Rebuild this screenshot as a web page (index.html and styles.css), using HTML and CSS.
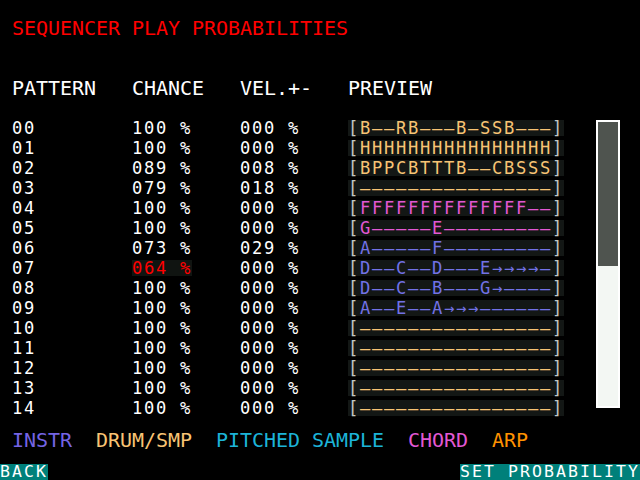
FILE: index.html
```html
<!DOCTYPE html>
<html>
<head>
<meta charset="utf-8">
<link rel="stylesheet" href="styles.css">
</head>
<body>
<div class="screen">
  <div class="title">SEQUENCER PLAY PROBABILITIES</div>
  <div class="row head">
    <span class="cell">PATTERN</span>
    <span class="cell">CHANCE</span>
    <span class="cell">VEL.+-</span>
    <span class="cell">PREVIEW</span>
  </div>
  <div class="main">
    <div class="table">
      <div class="row"><span class="cell">00</span><span class="cell">100 %</span><span class="cell">000 %</span><span class="prev drum">[<span class="seq">B––RB–––B–SSB–––</span>]</span></div>
      <div class="row"><span class="cell">01</span><span class="cell">100 %</span><span class="cell">000 %</span><span class="prev drum">[<span class="seq">HHHHHHHHHHHHHHHH</span>]</span></div>
      <div class="row"><span class="cell">02</span><span class="cell">089 %</span><span class="cell">008 %</span><span class="prev drum">[<span class="seq">BPPCBTTTB––CBSSS</span>]</span></div>
      <div class="row"><span class="cell">03</span><span class="cell">079 %</span><span class="cell">018 %</span><span class="prev drum">[<span class="seq">––––––––––––––––</span>]</span></div>
      <div class="row"><span class="cell">04</span><span class="cell">100 %</span><span class="cell">000 %</span><span class="prev chord">[<span class="seq">FFFFFFFFFFFFFF––</span>]</span></div>
      <div class="row"><span class="cell">05</span><span class="cell">100 %</span><span class="cell">000 %</span><span class="prev chord">[<span class="seq">G–––––E–––––––––</span>]</span></div>
      <div class="row"><span class="cell">06</span><span class="cell">073 %</span><span class="cell">029 %</span><span class="prev instr">[<span class="seq">A–––––F–––––––––</span>]</span></div>
      <div class="row"><span class="cell">07</span><span class="cell"><span class="sel">064 %</span></span><span class="cell">000 %</span><span class="prev instr">[<span class="seq">D––C––D–––E→→→→–</span>]</span></div>
      <div class="row"><span class="cell">08</span><span class="cell">100 %</span><span class="cell">000 %</span><span class="prev instr">[<span class="seq">D––C––B–––G→––––</span>]</span></div>
      <div class="row"><span class="cell">09</span><span class="cell">100 %</span><span class="cell">000 %</span><span class="prev instr">[<span class="seq">A––E––A→→→––––––</span>]</span></div>
      <div class="row"><span class="cell">10</span><span class="cell">100 %</span><span class="cell">000 %</span><span class="prev drum">[<span class="seq">––––––––––––––––</span>]</span></div>
      <div class="row"><span class="cell">11</span><span class="cell">100 %</span><span class="cell">000 %</span><span class="prev drum">[<span class="seq">––––––––––––––––</span>]</span></div>
      <div class="row"><span class="cell">12</span><span class="cell">100 %</span><span class="cell">000 %</span><span class="prev drum">[<span class="seq">––––––––––––––––</span>]</span></div>
      <div class="row"><span class="cell">13</span><span class="cell">100 %</span><span class="cell">000 %</span><span class="prev drum">[<span class="seq">––––––––––––––––</span>]</span></div>
      <div class="row"><span class="cell">14</span><span class="cell">100 %</span><span class="cell">000 %</span><span class="prev drum">[<span class="seq">––––––––––––––––</span>]</span></div>
    </div>
    <div class="scroll"><div class="thumb"></div></div>
  </div>
  <div class="legend">
    <span class="l-instr">INSTR</span>
    <span class="l-drum">DRUM/SMP</span>
    <span class="l-pitch">PITCHED SAMPLE</span>
    <span class="l-chord">CHORD</span>
    <span class="l-arp">ARP</span>
  </div>
  <div class="bottom">
    <span class="btn">BACK</span>
    <span class="btn">SET PROBABILITY</span>
  </div>
</div>
</body>
</html>
```

FILE: styles.css
```css
html, body {
  margin: 0;
  padding: 0;
  background: #000;
}

.screen {
  width: 640px;
  height: 480px;
  box-sizing: border-box;
  padding-top: 18px;
  display: flex;
  flex-direction: column;
  font-family: "DejaVu Sans Mono", "Liberation Mono", monospace;
  font-size: 20px;
  letter-spacing: -0.04px;
  line-height: 20px;
  color: #fff;
  overflow: hidden;
}

.title {
  padding-left: 12px;
  color: #ff0000;
  height: 20px;
  white-space: pre;
}

.row {
  display: grid;
  grid-template-columns: 120px 108px 108px 216px;
  height: 20px;
  white-space: pre;
}

.head {
  margin-top: 40px;
  padding-left: 12px;
}

.head .cell {
  display: block;
  height: 20px;
  line-height: 20px;
  margin-top: 0;
}

.main {
  margin-top: 20px;
  padding-left: 12px;
  display: flex;
  align-items: flex-start;
  font-size: 17.1px;
  letter-spacing: 1.71px;
}

.table {
  display: flex;
  flex-direction: column;
  width: 552px;
}

.cell {
  display: block;
  height: 16px;
  line-height: 16px;
  margin-top: 2px;
}

.sel {
  display: inline-block;
  width: 60px;
  height: 16px;
  background: #101411;
  color: #ff0000;
}

.prev {
  display: block;
  height: 16px;
  line-height: 16px;
  margin-top: 2px;
  width: 216px;
  background: #131715;
  color: #c4c8c4;
}

.drum .seq { color: #f8c474; }
.chord .seq { color: #e258d4; }
.instr .seq { color: #7272e6; }

.scroll {
  margin-left: 32px;
  margin-top: 2px;
  width: 24px;
  height: 288px;
  box-sizing: border-box;
  border: 2px solid #ffffff;
  background: #f3f7f3;
}

.thumb {
  height: 144px;
  background: #4f544f;
}

.legend {
  margin-top: 12px;
  padding-left: 12px;
  display: flex;
  gap: 24px;
  height: 20px;
  white-space: pre;
}

.l-instr { color: #7464e4; }
.l-drum { color: #f8c474; }
.l-pitch { color: #1cb4d8; }
.l-chord { color: #e258d4; }
.l-arp { color: #ff9200; }

.bottom {
  margin-top: auto;
  display: flex;
  justify-content: space-between;
  height: 16px;
}

.btn {
  background: #00807a;
  color: #fff;
  height: 16px;
  line-height: 16px;
  font-size: 16.5px;
  letter-spacing: 2.07px;
  white-space: pre;
}
```
